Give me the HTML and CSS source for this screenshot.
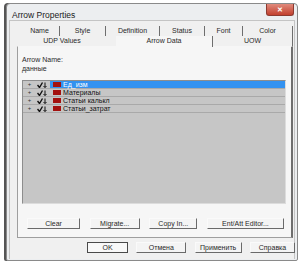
FILE: index.html
```html
<!DOCTYPE html>
<html lang="en">
<head>
    <meta charset="UTF-8">
    <meta name="viewport" content="width=device-width, initial-scale=1.0">
    <title>Arrow Properties</title>
    <link rel="stylesheet" href="styles.css">
</head>
<body>
    <div class="window">
        <div class="titlebar">
            <span class="title">Arrow Properties</span>
            <span class="close-btn">&#x2715;</span>
        </div>

        <div class="client">
            <!-- two rows of tabs, the front row touches the panel -->
            <div class="tabs">
                <div class="tab-row">
                    <div class="tab" style="width: 40px">Name</div>
                    <div class="tab" style="width: 46px">Style</div>
                    <div class="tab" style="width: 54px">Definition</div>
                    <div class="tab" style="width: 45px">Status</div>
                    <div class="tab" style="width: 38px">Font</div>
                    <div class="tab" style="width: 50px">Color</div>
                </div>
                <div class="tab-row">
                    <div class="tab tab-plain" style="width: 96px">UDP Values</div>
                    <div class="tab tab-active" style="width: 97px">Arrow Data</div>
                    <div class="tab" style="width: 80px">UOW</div>
                </div>
            </div>

            <div class="panel">
                <div class="field-label">Arrow Name:</div>
                <div class="field-value">данные</div>

                <div class="tree">
                    <div class="tree-row selected">
                        <span class="expander">+</span>
                        <svg class="check" viewBox="0 0 10 6" width="10" height="6"><path d="M0.5 3 L2.5 5.5 L5.5 0.5" fill="none" stroke="#111" stroke-width="1.4"/><path d="M8 0.5 V5.5 M6.5 4 L8 5.5 L9.5 4" fill="none" stroke="#111" stroke-width="1"/></svg>
                        <span class="swatch"></span>
                        <span class="tree-text">Ед_изм</span>
                    </div>
                    <div class="tree-row">
                        <span class="expander">+</span>
                        <svg class="check" viewBox="0 0 10 6" width="10" height="6"><path d="M0.5 3 L2.5 5.5 L5.5 0.5" fill="none" stroke="#111" stroke-width="1.4"/><path d="M8 0.5 V5.5 M6.5 4 L8 5.5 L9.5 4" fill="none" stroke="#111" stroke-width="1"/></svg>
                        <span class="swatch"></span>
                        <span class="tree-text">Материалы</span>
                    </div>
                    <div class="tree-row">
                        <span class="expander">+</span>
                        <svg class="check" viewBox="0 0 10 6" width="10" height="6"><path d="M0.5 3 L2.5 5.5 L5.5 0.5" fill="none" stroke="#111" stroke-width="1.4"/><path d="M8 0.5 V5.5 M6.5 4 L8 5.5 L9.5 4" fill="none" stroke="#111" stroke-width="1"/></svg>
                        <span class="swatch"></span>
                        <span class="tree-text">Статьи калькл</span>
                    </div>
                    <div class="tree-row">
                        <span class="expander">+</span>
                        <svg class="check" viewBox="0 0 10 6" width="10" height="6"><path d="M0.5 3 L2.5 5.5 L5.5 0.5" fill="none" stroke="#111" stroke-width="1.4"/><path d="M8 0.5 V5.5 M6.5 4 L8 5.5 L9.5 4" fill="none" stroke="#111" stroke-width="1"/></svg>
                        <span class="swatch"></span>
                        <span class="tree-text">Статьи_затрат</span>
                    </div>
                </div>

                <div class="panel-buttons">
                    <button type="button" class="btn" style="width: 53px">Clear</button>
                    <button type="button" class="btn" style="width: 50px">Migrate...</button>
                    <button type="button" class="btn" style="width: 48px">Copy In...</button>
                    <button type="button" class="btn" style="width: 77px">Ent/Att Editor...</button>
                </div>
            </div>

            <div class="footer">
                <button type="button" class="btn btn-default" style="width: 41px">OK</button>
                <button type="button" class="btn" style="width: 50px">Отмена</button>
                <button type="button" class="btn" style="width: 47px">Применить</button>
                <button type="button" class="btn" style="width: 45px">Справка</button>
            </div>
        </div>
    </div>
</body>
</html>
```

FILE: styles.css
```css
body {
    margin: 0;
    background: #ffffff;
    font-family: "Liberation Sans", Arial, sans-serif;
    font-size: 7px;
    color: #2a2a2a;
}

.window {
    width: 290px;
    height: 256px;
    margin: 3px 0 0 6px;
    border: 1px solid #8a8a8a;
    border-radius: 4px 4px 2px 2px;
    background: #eceef0;
    box-shadow: -2px 0 0 #555;
}

.titlebar {
    display: flex;
    align-items: flex-start;
    height: 16px;
    padding: 0 3px 0 5px;
}

.title {
    margin-top: 6px;
    font-size: 8.5px;
    color: #1a1a1a;
}

.close-btn {
    margin-left: auto;
    width: 26px;
    height: 11px;
    line-height: 11px;
    text-align: center;
    font-size: 7px;
    font-weight: bold;
    color: #fff;
    background: linear-gradient(#e08a7c, #c2402e);
    border: 1px solid #8c3a30;
    border-top: none;
    border-radius: 0 0 3px 3px;
}

.client {
    height: 238px;
    margin: 0 2px;
    border: 1px solid #c4c4c4;
    border-bottom: none;
    background: #f0f0f0;
}

/* tabs */
.tabs {
    padding: 5px 0 0 10px;
}

.tab-row {
    display: flex;
    height: 10px;
}

.tab {
    height: 10px;
    line-height: 10px;
    text-align: center;
    border-right: 1px solid #6e6e6e;
    box-sizing: border-box;
}

.tab-plain {
    border-right: none;
    padding-right: 12px;
}

.tab-active {
    background: #f6f6f6;
    height: 11px;
}

.panel {
    width: 276px;
    height: 192px;
    margin-left: 7px;
    box-sizing: border-box;
    border: 1px solid #9e9e9e;
    border-top-color: #f6f6f6;
    border-right: 2px solid #6e6e6e;
    background: #f6f6f6;
    padding: 8px 6px 0 4px;
}

.field-label {
    line-height: 9px;
}

.field-value {
    line-height: 9px;
}

/* tree list */
.tree {
    margin-top: 7px;
    width: 264px;
    height: 124px;
    box-sizing: border-box;
    background: #c6c6c6;
    border: 1px solid #8d8d8d;
    border-right-color: #dcdcdc;
    border-bottom-color: #dcdcdc;
}

.tree-row {
    display: flex;
    align-items: center;
    height: 8px;
    box-sizing: border-box;
    border-bottom: 1px solid #a9a9a9;
    color: #111;
}

.expander {
    width: 5px;
    height: 5px;
    margin-left: 4px;
    line-height: 5px;
    font-size: 6px;
    text-align: center;
    color: #333;
}

.check {
    margin-left: 5px;
}

.swatch {
    width: 8px;
    height: 5px;
    margin-left: 6px;
    background: #a3110f;
}

.tree-text {
    flex: 1;
    margin-left: 2px;
    line-height: 7px;
}

.tree-row.selected {
    background: linear-gradient(90deg, #c6c6c6 27px, #3392f0 27px, #3392f0 262px, #c6c6c6 262px);
}

.tree-row.selected .tree-text {
    color: #fff;
}

/* buttons */
.btn {
    height: 11px;
    padding: 0;
    font-family: "Liberation Sans", Arial, sans-serif;
    font-size: 7px;
    color: #2a2a2a;
    background: #f4f4f4;
    border: 1px solid #fafafa;
    border-right-color: #6a6a6a;
    border-bottom-color: #6a6a6a;
}

.btn-default {
    border: 1px solid #4a4a4a;
    background: #f8f8f8;
}

.panel-buttons {
    display: flex;
    justify-content: space-between;
    width: 257px;
    margin: 14px 0 0 5px;
}

.footer {
    display: flex;
    justify-content: space-between;
    width: 208px;
    margin: 4px 0 0 77px;
}
```
